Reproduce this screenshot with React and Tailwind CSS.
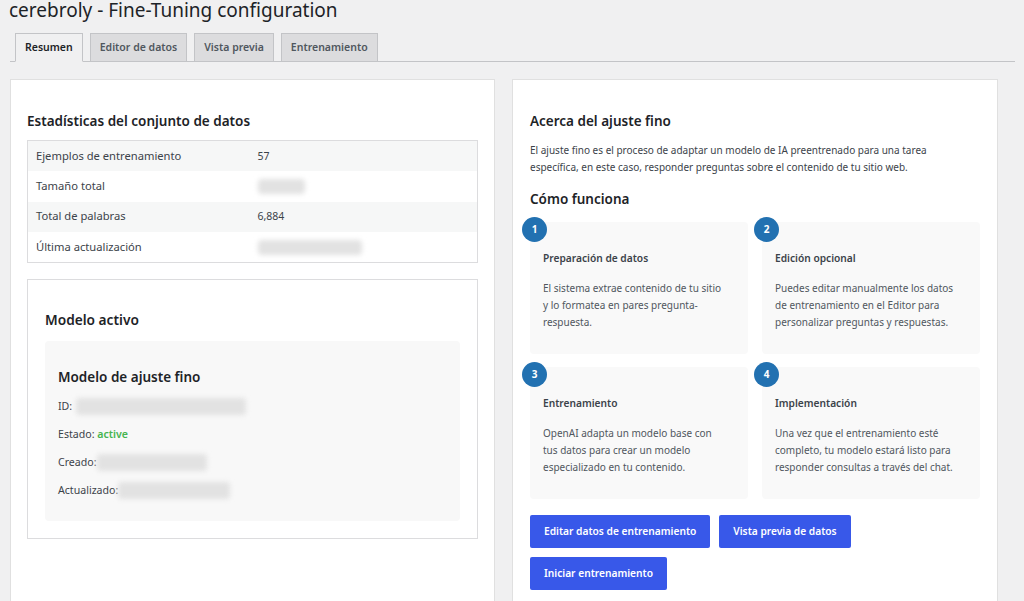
import React from 'react';

const tabs = ['Resumen', 'Editor de datos', 'Vista previa', 'Entrenamiento'];

const stats = [
  { label: 'Ejemplos de entrenamiento', value: '57' },
  { label: 'Tamaño total', blur: 'w-[47px]' },
  { label: 'Total de palabras', value: '6,884' },
  { label: 'Última actualización', blur: 'w-[104px]' },
];

const steps = [
  {
    n: 1,
    title: 'Preparación de datos',
    text: 'El sistema extrae contenido de tu sitio y lo formatea en pares pregunta-respuesta.',
  },
  {
    n: 2,
    title: 'Edición opcional',
    text: 'Puedes editar manualmente los datos de entrenamiento en el Editor para personalizar preguntas y respuestas.',
  },
  {
    n: 3,
    title: 'Entrenamiento',
    text: 'OpenAI adapta un modelo base con tus datos para crear un modelo especializado en tu contenido.',
  },
  {
    n: 4,
    title: 'Implementación',
    text: 'Una vez que el entrenamiento esté completo, tu modelo estará listo para responder consultas a través del chat.',
  },
];

function Blurred({ className }) {
  return <span className={`inline-block align-middle rounded-[4px] bg-[#e2e2e2] blur-[2.5px] ${className}`} />;
}

function StatsTable() {
  return (
    <table className="w-full border-collapse border border-[#dcdcde] text-[11.2px] text-[#3c434a]">
      <tbody>
        {stats.map((row, i) => (
          <tr key={row.label} className={i % 2 === 0 ? 'bg-[#f6f7f7]' : 'bg-white'}>
            <td className="w-[222px] h-[30.5px] pl-[8px] py-0">{row.label}</td>
            <td className="h-[30.5px] pl-[8px] py-0">
              {row.value ? <span className="text-[10.5px]">{row.value}</span> : <Blurred className={`h-[15px] ${row.blur}`} />}
            </td>
          </tr>
        ))}
      </tbody>
    </table>
  );
}

function ActiveModel() {
  return (
    <div className="mt-[16px] border border-[#dcdcde] px-[17px] pt-[30px] pb-[17px]">
      <h2 className="text-[13.7px] leading-[20px] font-semibold text-[#1d2327] mb-[11px]">Modelo activo</h2>
      <div className="rounded-[4px] bg-[#f8f8f8] px-[13px] pt-[26px] pb-[22px]">
        <h3 className="text-[13.5px] leading-[20px] font-semibold text-[#1d2327] mb-[11px]">Modelo de ajuste fino</h3>
        <div className="flex flex-col gap-[11px] text-[10.6px] leading-[17px] text-[#3c434a]">
          <div className="flex items-center">
            <span>ID:</span>
            <Blurred className="ml-[4px] w-[170px] h-[17px]" />
          </div>
          <div>
            Estado: <span className="font-semibold text-[#46b450]">active</span>
          </div>
          <div className="flex items-center">
            <span>Creado:</span>
            <Blurred className="w-[110px] h-[17px]" />
          </div>
          <div className="flex items-center">
            <span>Actualizado:</span>
            <Blurred className="w-[112px] h-[17px]" />
          </div>
        </div>
      </div>
    </div>
  );
}

function StepCard({ step }) {
  return (
    <div className="relative rounded-[4px] bg-[#f9f9f9] pl-[13px] pr-[22px] pt-[28px] pb-[23px]">
      <div className="absolute -left-[8px] -top-[5px] flex h-[25px] w-[25px] items-center justify-center rounded-full bg-[#2271b1] text-[10px] font-bold text-white">
        {step.n}
      </div>
      <h4 className="text-[10.2px] leading-[17px] font-semibold text-[#3c434a] mb-[13px]">{step.title}</h4>
      <p className="text-[10px] leading-[17px] text-[#50575e]">{step.text}</p>
    </div>
  );
}

export default function App() {
  return (
    <div className="h-[601px] overflow-hidden bg-[#f0f0f1] font-['Noto_Sans',sans-serif] px-[9px]">
      <h1 className="text-[19px] leading-[20px] text-[#1d2327]">cerebroly - Fine-Tuning configuration</h1>
      <nav className="mt-[13px] ml-[1px] flex gap-[7px] border-b border-[#c3c4c7] pl-[5px]">
        {tabs.map((t, i) => (
          <div
            key={t}
            className={`-mb-px flex h-[29px] items-center border border-[#c3c4c7] px-[9px] text-[10.5px] font-semibold ${
              i === 0 ? 'border-b-[#f0f0f1] bg-[#f0f0f1] text-[#1d2327]' : 'bg-[#dcdcde] text-[#50575e]'
            }`}
          >
            {t}
          </div>
        ))}
      </nav>

      <div className="mt-[17px] ml-[1px] flex items-start gap-[17px]">
        <section className="h-[540px] w-[485px] shrink-0 border border-[#e0e0e0] bg-white px-[16px] pt-[32px]">
          <h2 className="text-[13.5px] leading-[18px] font-semibold text-[#1d2327] mb-[10px]">
            Estadísticas del conjunto de datos
          </h2>
          <StatsTable />
          <ActiveModel />
        </section>

        <section className="h-[540px] w-[486px] shrink-0 border border-[#e0e0e0] bg-white pl-[17px] pr-[17px] pt-[32px]">
          <h2 className="text-[13.5px] leading-[18px] font-semibold text-[#1d2327] mb-[12px]">Acerca del ajuste fino</h2>
          <p className="text-[10px] leading-[17px] text-[#3c434a]">
            El ajuste fino es el proceso de adaptar un modelo de IA preentrenado para una tarea
            <br />
            específica, en este caso, responder preguntas sobre el contenido de tu sitio web.
          </p>
          <h3 className="mt-[14px] mb-[14px] text-[13.5px] leading-[18px] font-semibold text-[#1d2327]">Cómo funciona</h3>
          <div className="grid grid-cols-2 gap-x-[14px] gap-y-[13px]">
            {steps.map((s) => (
              <StepCard key={s.n} step={s} />
            ))}
          </div>
          <div className="mt-[16px] flex flex-wrap gap-[9px]">
            {['Editar datos de entrenamiento', 'Vista previa de datos', 'Iniciar entrenamiento'].map((b) => (
              <button
                key={b}
                className="h-[33px] rounded-[2px] bg-[#3858e9] px-[14px] text-[10.2px] font-semibold text-white"
              >
                {b}
              </button>
            ))}
          </div>
        </section>
      </div>
    </div>
  );
}
